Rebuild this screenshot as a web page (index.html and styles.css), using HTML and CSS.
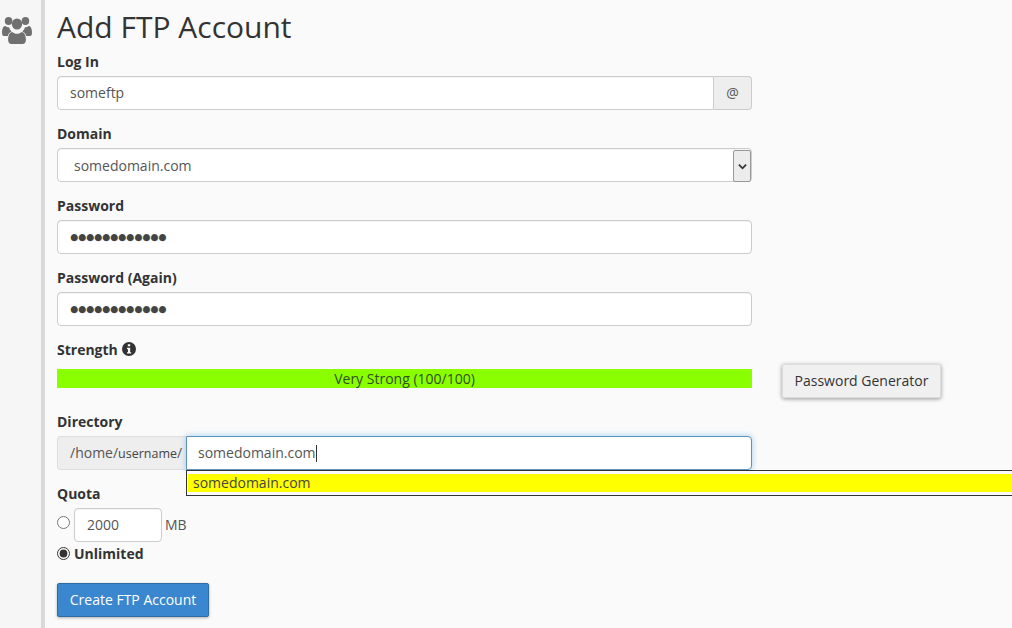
FILE: index.html
```html
<!DOCTYPE html>
<html lang="en">
<head>
    <meta charset="UTF-8">
    <title>Add FTP Account</title>
    <link rel="stylesheet" href="styles.css">
</head>
<body>
    <aside class="sidebar">
        <svg class="users-icon" viewBox="0 0 32 28" width="30" height="28" preserveAspectRatio="none" aria-hidden="true">
            <circle cx="7" cy="5" r="4"/>
            <circle cx="25" cy="5" r="4"/>
            <circle cx="16" cy="8" r="5.500"/>
            <path d="M0 16.500c0-4 1.500-6.500 3.500-6.500 1.300 1 2.600 1.500 4 1.300.5 1.800 1.500 3.200 2.700 4.100-2 .7-3.600 2.500-4 4.600H2c-1.200 0-2-1-2-3.500z"/>
            <path d="M32 16.500c0-4-1.500-6.500-3.500-6.500-1.300 1-2.600 1.500-4 1.300-.5 1.800-1.500 3.200-2.700 4.100 2 .7 3.600 2.500 4 4.600H30c1.200 0 2-1 2-3.500z"/>
            <path d="M6.500 23.500c0-4.500 2-7.500 4.500-7.500 1.400 1.200 3 1.800 5 1.800s3.600-.6 5-1.800c2.500 0 4.500 3 4.500 7.500 0 3-1.500 4.500-3.500 4.500H10c-2 0-3.500-1.500-3.500-4.500z"/>
        </svg>
    </aside>

    <main class="content">
        <h1>Add FTP Account</h1>

        <div class="group">
            <label class="label">Log In</label>
            <div class="input-row">
                <div class="field field-joined">someftp</div>
                <div class="addon">@</div>
            </div>
        </div>

        <div class="group">
            <label class="label">Domain</label>
            <div class="field select-field">
                <span>somedomain.com</span>
                <span class="select-arrow">
                    <svg viewBox="0 0 10 7" width="9" height="7" aria-hidden="true"><path d="M1 1.500l4 4 4-4" fill="none" stroke="#333" stroke-width="2"/></svg>
                </span>
            </div>
        </div>

        <div class="group">
            <label class="label">Password</label>
            <div class="field dots">●●●●●●●●●●●●</div>
        </div>

        <div class="group">
            <label class="label">Password (Again)</label>
            <div class="field dots">●●●●●●●●●●●●</div>
        </div>

        <div class="group">
            <label class="label">Strength
                <svg class="info-icon" viewBox="0 0 14 14" width="14" height="14" aria-hidden="true">
                    <path fill-rule="evenodd" d="M7 0a7 7 0 1 1 0 14A7 7 0 0 1 7 0zM5.800 2.300v2h2.400v-2zM5 5.800v1.400h1v3H5v1.400h4.200v-1.400h-1V5.800z"/>
                </svg>
            </label>
            <div class="strength-row">
                <div class="strength-bar">Very Strong (100/100)</div>
                <button class="btn-generator">Password Generator</button>
            </div>
        </div>

        <div class="group">
            <label class="label">Directory</label>
            <div class="input-row">
                <div class="prefix">/home/<span class="prefix-user">username</span>/</div>
                <div class="dir-wrap">
                    <div class="field field-focus">somedomain.com<span class="caret"></span></div>
                    <div class="autocomplete"><div class="autocomplete-item">somedomain.com</div></div>
                </div>
            </div>
        </div>

        <div class="group">
            <label class="label">Quota</label>
            <div class="quota-row">
                <input type="radio" name="quota" class="radio">
                <div class="field quota-input">2000</div>
                <span class="unit">MB</span>
            </div>
            <div class="unlimited-row">
                <input type="radio" name="quota" class="radio" checked>
                <span class="unlimited">Unlimited</span>
            </div>
        </div>

        <button class="btn-create">Create FTP Account</button>
    </main>
</body>
</html>
```

FILE: styles.css
```css
body {
    margin: 0;
    height: 628px;
    overflow: hidden;
    display: flex;
    background: #fafafa;
    color: #333;
    font-family: "Open Sans", sans-serif;
    font-size: 14px;
}

.sidebar {
    width: 41px;
    flex: none;
    background: #f6f6f6;
    border-right: 4px solid #d9d9d9;
    padding-top: 16px;
    display: flex;
    justify-content: center;
    align-items: flex-start;
}

.users-icon {
    fill: #707070;
    margin-left: -7px;
}

.content {
    width: 695px;
    margin-left: 12px;
    flex: none;
}

h1 {
    margin: 8px 0 0;
    font-size: 30px;
    line-height: 38px;
    font-weight: 400;
    color: #333;
}

.group {
    margin-bottom: 14px;
}

.label {
    display: block;
    height: 19px;
    margin: 6px 0 5px;
    font-weight: 700;
    font-size: 14px;
    line-height: 19px;
}

.group + .group .label {
    margin-top: 0;
}

.input-row {
    display: flex;
}

.field {
    box-sizing: border-box;
    height: 34px;
    padding: 0 12px;
    background: #fff;
    border: 1px solid #ccc;
    border-radius: 4px;
    color: #555;
    font-size: 14px;
    line-height: 32px;
    box-shadow: inset 0 1px 1px rgba(0, 0, 0, 0.05);
}

.field-joined {
    flex: 1;
    border-radius: 4px 0 0 4px;
}

.addon {
    box-sizing: border-box;
    width: 38px;
    height: 34px;
    background: #eee;
    border: 1px solid #ccc;
    border-left: none;
    border-radius: 0 4px 4px 0;
    color: #555;
    font-size: 14px;
    line-height: 32px;
    text-align: center;
}

.select-field {
    display: flex;
    justify-content: space-between;
    padding: 0 0 0 16px;
    line-height: 33px;
}

.select-arrow {
    width: 16px;
    height: 30px;
    margin-top: 1px;
    background: #ececec;
    border: 1px solid #999;
    border-radius: 2px;
    display: flex;
    align-items: center;
    justify-content: center;
}

.dots {
    font-family: "DejaVu Sans", sans-serif;
    font-size: 9.200px;
    line-height: 32px;
    color: #444;
}

.strength-row {
    position: relative;
    height: 34px;
    padding-top: 5px;
    box-sizing: border-box;
}

.strength-bar {
    height: 19px;
    background: #8aff00;
    color: #2f4f1f;
    font-size: 14px;
    line-height: 19px;
    text-align: center;
}

.btn-generator {
    position: absolute;
    left: 725px;
    top: 0;
    height: 34px;
    width: 159px;
    padding: 0 0 2px;
    background: #f0f0f0;
    border: 1px solid #ddd;
    border-radius: 2px;
    box-shadow: 0 1px 4px rgba(0, 0, 0, 0.4);
    color: #333;
    font-family: "Open Sans", sans-serif;
    font-size: 14px;
}

.prefix {
    box-sizing: border-box;
    width: 129px;
    height: 34px;
    padding-left: 12px;
    background: #eee;
    border: 1px solid #ddd;
    border-right: none;
    border-radius: 4px 0 0 4px;
    color: #555;
    font-size: 14px;
    line-height: 32px;
    white-space: nowrap;
}

.prefix-user {
    font-size: 12.500px;
    color: #444;
}

.dir-wrap {
    position: relative;
    flex: 1;
}

.field-focus {
    padding-left: 11px;
    border-color: #5b93bf;
    border-radius: 0 4px 4px 0;
    box-shadow: 0 0 6px rgba(102, 175, 233, 0.6);
}

.caret {
    display: inline-block;
    width: 1px;
    height: 17px;
    background: #333;
    vertical-align: -4px;
}

.autocomplete {
    position: absolute;
    left: 0;
    top: 34px;
    width: 826px;
    height: 26px;
    box-sizing: border-box;
    background: #fafafa;
    border: 1px solid #333;
    border-right: none;
    padding: 3px 0 3px 1px;
    z-index: 5;
}

.autocomplete-item {
    height: 18px;
    padding-left: 5px;
    background: #ffff00;
    color: #444;
    font-size: 14px;
    line-height: 18px;
}

.quota-row {
    display: flex;
    align-items: center;
    height: 34px;
}

.radio {
    width: 13px;
    height: 13px;
    margin: 0 4px 0 0;
    accent-color: #333;
    flex: none;
}

.quota-row .radio {
    margin-top: -6px;
}

.quota-input {
    width: 88px;
}

.unit {
    margin-left: 3px;
    margin-top: -2px;
    color: #555;
}

.unlimited-row {
    display: flex;
    align-items: center;
    height: 19px;
    margin-top: 2px;
}

.unlimited {
    font-weight: 700;
}

.btn-create {
    display: block;
    margin-top: 20px;
    width: 152px;
    height: 34px;
    padding: 0 0 2px;
    background: #3a87cf;
    border: 1px solid #2e6da4;
    border-radius: 2px;
    box-shadow: 0 1px 3px rgba(0, 0, 0, 0.3);
    color: #fff;
    font-family: "Open Sans", sans-serif;
    font-size: 14px;
}

.info-icon {
    fill: #333;
    vertical-align: -1px;
    margin-left: 1px;
}
```
